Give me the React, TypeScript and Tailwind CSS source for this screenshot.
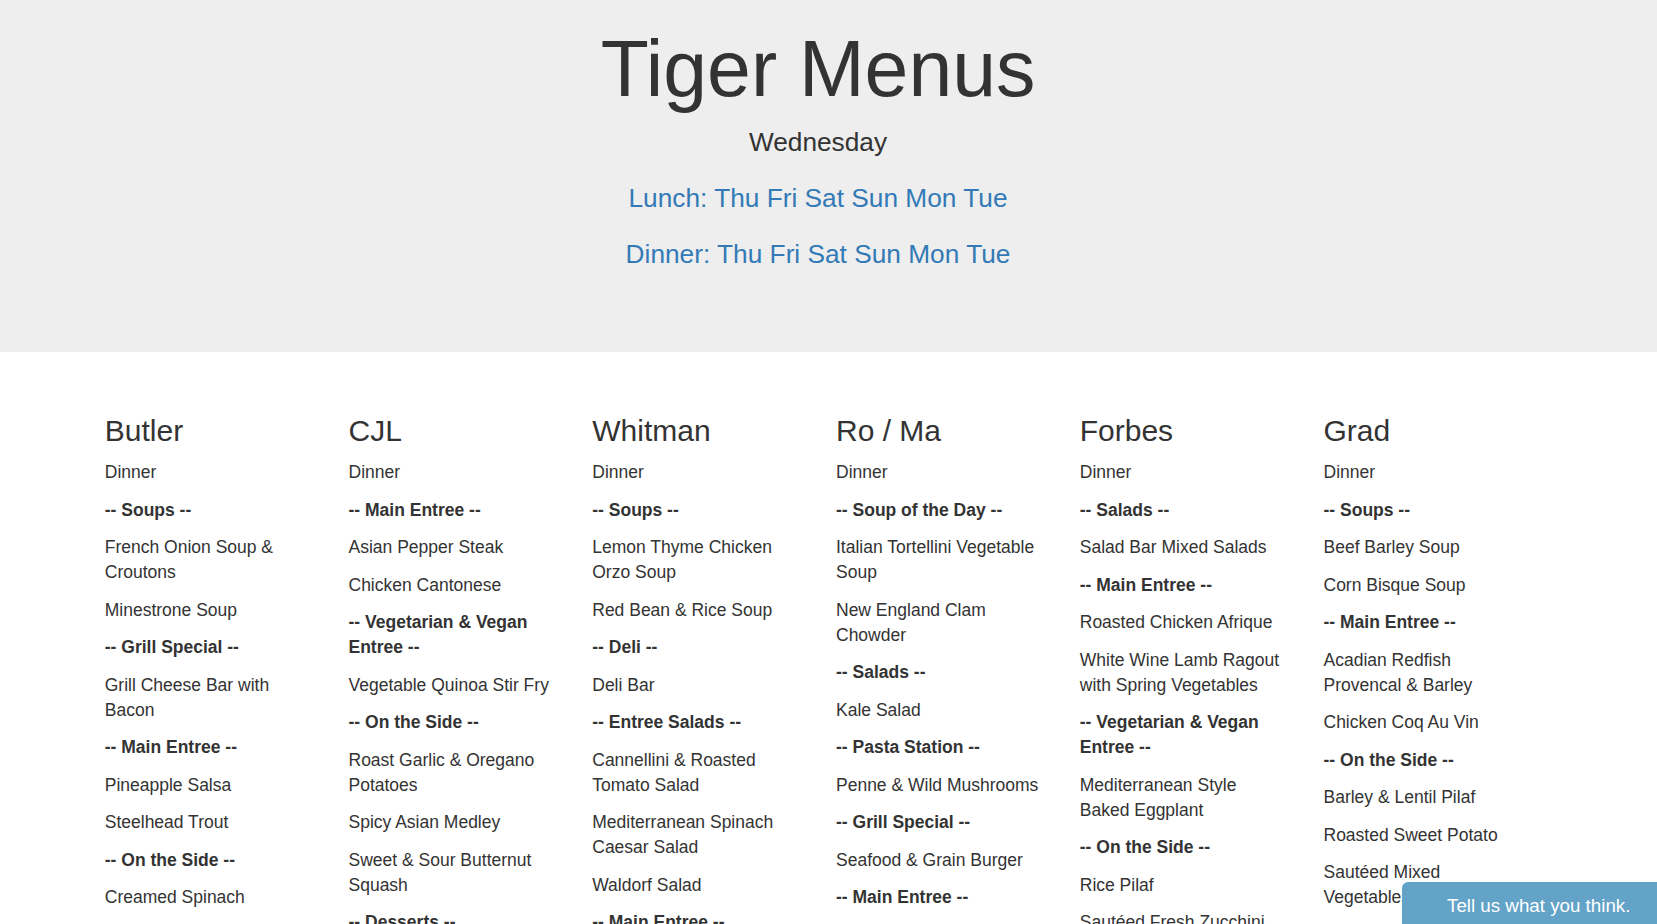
import React from 'react';

type Line = { text: string; header?: boolean };

interface Hall {
  name: string;
  items: Line[];
}

const h = (text: string): Line => ({ text, header: true });
const i = (text: string): Line => ({ text });

const halls: Hall[] = [
  {
    name: 'Butler',
    items: [
      i('Dinner'),
      h('-- Soups --'),
      i('French Onion Soup & Croutons'),
      i('Minestrone Soup'),
      h('-- Grill Special --'),
      i('Grill Cheese Bar with Bacon'),
      h('-- Main Entree --'),
      i('Pineapple Salsa'),
      i('Steelhead Trout'),
      h('-- On the Side --'),
      i('Creamed Spinach'),
      i('Roasted Red Potatoes'),
    ],
  },
  {
    name: 'CJL',
    items: [
      i('Dinner'),
      h('-- Main Entree --'),
      i('Asian Pepper Steak'),
      i('Chicken Cantonese'),
      h('-- Vegetarian & Vegan Entree --'),
      i('Vegetable Quinoa Stir Fry'),
      h('-- On the Side --'),
      i('Roast Garlic & Oregano Potatoes'),
      i('Spicy Asian Medley'),
      i('Sweet & Sour Butternut Squash'),
      h('-- Desserts --'),
      i('Chocolate Chip Cookies'),
    ],
  },
  {
    name: 'Whitman',
    items: [
      i('Dinner'),
      h('-- Soups --'),
      i('Lemon Thyme Chicken Orzo Soup'),
      i('Red Bean & Rice Soup'),
      h('-- Deli --'),
      i('Deli Bar'),
      h('-- Entree Salads --'),
      i('Cannellini & Roasted Tomato Salad'),
      i('Mediterranean Spinach Caesar Salad'),
      i('Waldorf Salad'),
      h('-- Main Entree --'),
      i('Herb Roasted Chicken'),
    ],
  },
  {
    name: 'Ro / Ma',
    items: [
      i('Dinner'),
      h('-- Soup of the Day --'),
      i('Italian Tortellini Vegetable Soup'),
      i('New England Clam Chowder'),
      h('-- Salads --'),
      i('Kale Salad'),
      h('-- Pasta Station --'),
      i('Penne & Wild Mushrooms'),
      h('-- Grill Special --'),
      i('Seafood & Grain Burger'),
      h('-- Main Entree --'),
      i('Beef Stroganoff'),
    ],
  },
  {
    name: 'Forbes',
    items: [
      i('Dinner'),
      h('-- Salads --'),
      i('Salad Bar Mixed Salads'),
      h('-- Main Entree --'),
      i('Roasted Chicken Afrique'),
      i('White Wine Lamb Ragout with Spring Vegetables'),
      h('-- Vegetarian & Vegan Entree --'),
      i('Mediterranean Style Baked Eggplant'),
      h('-- On the Side --'),
      i('Rice Pilaf'),
      i('Sautéed Fresh Zucchini'),
    ],
  },
  {
    name: 'Grad',
    items: [
      i('Dinner'),
      h('-- Soups --'),
      i('Beef Barley Soup'),
      i('Corn Bisque Soup'),
      h('-- Main Entree --'),
      i('Acadian Redfish Provencal & Barley'),
      i('Chicken Coq Au Vin'),
      h('-- On the Side --'),
      i('Barley & Lentil Pilaf'),
      i('Roasted Sweet Potato'),
      i('Sautéed Mixed Vegetables'),
    ],
  },
];

const days = ['Thu', 'Fri', 'Sat', 'Sun', 'Mon', 'Tue'];

const MealLinks: React.FC<{ meal: string; className: string }> = ({ meal, className }) => (
  <p className={`${className} text-[26.25px] leading-[37.5px] text-[#337ab7]`}>
    <a href="#" className="hover:underline">{meal}:</a>
    {days.map(d => (
      <React.Fragment key={d}>
        {' '}
        <a href="#" className="hover:underline">{d}</a>
      </React.Fragment>
    ))}
  </p>
);

export default function App() {
  return (
    <div className="min-h-screen bg-white text-[#333333] font-['Liberation_Sans',Arial,sans-serif]">
      {/* Jumbotron */}
      <div className="bg-[#eeeeee] pt-[26px] pb-[79px]">
        <div className="pr-[21px] text-center">
          <h1 className="text-[78.75px] leading-[86.6px] font-normal">Tiger Menus</h1>
          <p className="mt-[11px] text-[26.25px] leading-[37.5px]">Wednesday</p>
          <MealLinks meal="Lunch" className="mt-[19px]" />
          <MealLinks meal="Dinner" className="mt-[18px]" />
        </div>
      </div>

      {/* Dining halls */}
      <div className="pt-[62px] pl-[86px]">
        <div className="grid grid-cols-[repeat(6,243.75px)]">
          {halls.map(hall => (
            <div key={hall.name} className="px-[18.75px]">
              <h2 className="text-[30px] leading-[33px] mb-[13px]">{hall.name}</h2>
              {hall.items.map((line, idx) => (
                <p key={idx} className="text-[17.5px] leading-[25px] mb-[12.5px]">
                  {line.header ? <strong className="font-bold">{line.text}</strong> : line.text}
                </p>
              ))}
            </div>
          ))}
        </div>
      </div>

      {/* Feedback tab */}
      <button className="fixed right-0 bottom-0 w-[255px] h-[42px] bg-[#63a3c8] rounded-tl-[6px] pl-[45px] pt-[6px] text-left text-white text-[18.75px] leading-[26.8px]">
        Tell us what you think.
      </button>
    </div>
  );
}
